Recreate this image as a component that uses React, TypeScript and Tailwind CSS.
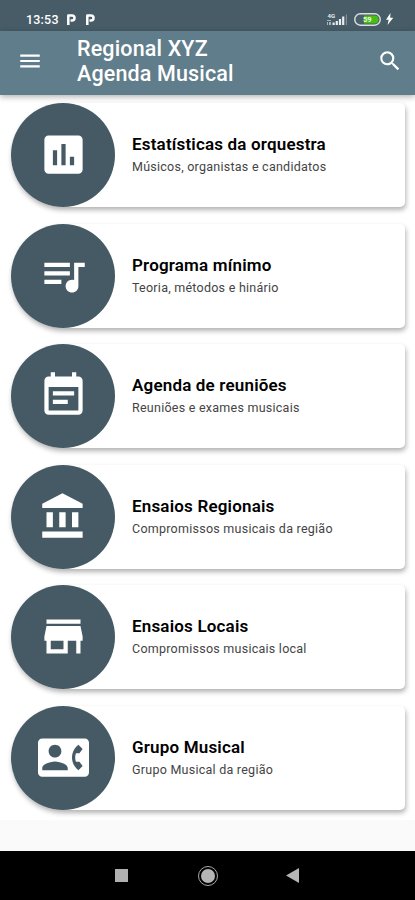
import { MdMenu, MdSearch } from "react-icons/md";

const items = [
  {
    title: "Estatísticas da orquestra",
    subtitle: "Músicos, organistas e candidatos",
    icon: "M19 3H5c-1.100 0-2 .9-2 2v14c0 1.100.9 2 2 2h14c1.100 0 2-.9 2-2V5c0-1.100-.9-2-2-2zM9 17H7v-7h2v7zm4 0h-2V7h2v10zm4 0h-2v-4h2v4z",
  },
  {
    title: "Programa mínimo",
    subtitle: "Teoria, métodos e hinário",
    icon: "M15 6H3v2h12V6zm0 4H3v2h12v-2zM3 16h8v-2H3v2zM17 6v8.180c-.31-.11-.65-.18-1-.18-1.660 0-3 1.340-3 3s1.340 3 3 3 3-1.340 3-3V8h3V6h-5z",
  },
  {
    title: "Agenda de reuniões",
    subtitle: "Reuniões e exames musicais",
    icon: "M17 10H7v2h10v-2zm2-7h-1V1h-2v2H8V1H6v2H5c-1.110 0-1.990.9-1.990 2L3 19c0 1.100.89 2 2 2h14c1.100 0 2-.9 2-2V5c0-1.100-.9-2-2-2zm0 16H5V8h14v11zm-5-5H7v2h7v-2z",
  },
  {
    title: "Ensaios Regionais",
    subtitle: "Compromissos musicais da região",
    icon: "M4 10v7h3v-7H4zm6 0v7h3v-7h-3zM2 22h19v-3H2v3zm14-12v7h3v-7h-3zm-4.500-9L2 6v2h19V6l-9.500-5z",
  },
  {
    title: "Ensaios Locais",
    subtitle: "Compromissos musicais local",
    icon: "M20 4H4v2h16V4zm1 10v-2l-1-5H4l-1 5v2h1v6h10v-6h4v6h2v-6h1zm-9 4H6v-4h6v4z",
  },
  {
    title: "Grupo Musical",
    subtitle: "Grupo Musical da região",
    icon: "M22 3H2C.9 3 0 3.900 0 5v14c0 1.100.9 2 2 2h20c1.100 0 1.990-.9 1.990-2L24 5c0-1.100-.9-2-2-2zM8 6c1.660 0 3 1.340 3 3s-1.340 3-3 3-3-1.340-3-3 1.340-3 3-3zm6 12H2v-1c0-2 4-3.100 6-3.100s6 1.100 6 3.100v1zm3.850-4h1.640L21 16l-1.990 1.990c-1.310-.98-2.280-2.380-2.730-3.990-.18-.64-.28-1.310-.28-2s.1-1.360.28-2c.45-1.620 1.420-3.010 2.730-3.990L21 8l-1.510 2h-1.640c-.22.63-.35 1.300-.35 2s.13 1.370.35 2z",
  },
];

function ParkingIcon() {
  return (
    <svg width="11" height="13" viewBox="0 0 11 13" fill="none" aria-hidden="true">
      <path d="M2.300 12V2.600H6a2.500 2.500 0 0 1 0 5H4.500" stroke="white" strokeWidth="2.500" strokeLinejoin="round" />
    </svg>
  );
}

function SignalIcon() {
  return (
    <svg width="23" height="14" viewBox="0 0 23 14" fill="#e8eef0" aria-hidden="true">
      <text x="1.500" y="5.500" fontSize="6" fontWeight="700">4G</text>
      <path d="M1 8h4v1H1zM1 10h1v3H1zM3 10h2v3H3z" opacity="0.600" />
      <path d="M6.500 10.500h2.200V13H6.500zM9.700 9h2.200v4H9.700zM12.900 7h2.200v6h-2.200zM16.100 4.500h2.200V13h-2.200z" />
      <path d="M19.800 2.500H21V13h-1.200z" opacity="0.350" />
    </svg>
  );
}

function BatteryIcon() {
  return (
    <svg width="27" height="13" viewBox="0 0 27 13" aria-hidden="true">
      <rect x="0.800" y="0.800" width="25.400" height="11.400" rx="5.500" fill="#4b5f66" stroke="#d9e0e3" strokeWidth="1.400" />
      <path d="M10 2.500h10.500a4 4 0 0 1 0 8H10z" fill="#47bd16" />
      <text x="9" y="9.300" fontSize="7.500" fontWeight="700" fill="#e9fbe2">59</text>
    </svg>
  );
}

function StatusBar() {
  return (
    <div className="flex h-[31px] items-end justify-between bg-[#475c67] pb-[5px] pl-[26px] pr-[21px] text-white">
      <div className="flex items-center">
        <span className="w-[35px] text-[12.500px] font-medium leading-[13px] tracking-[0.200px]">13:53</span>
        <div className="ml-[5px] flex gap-2">
          <ParkingIcon />
          <ParkingIcon />
        </div>
      </div>
      <div className="flex items-center">
        <SignalIcon />
        <div className="ml-[5px] mr-1">
          <BatteryIcon />
        </div>
        <svg width="9" height="12" viewBox="0 0 9 12" fill="white" aria-hidden="true">
          <path d="M5.500 0 1 6.800h2.700L2.500 12 8.300 4.800H5.200z" />
        </svg>
      </div>
    </div>
  );
}

function AppBar() {
  return (
    <header className="relative z-10 flex h-16 items-center bg-[#607d8b] text-white shadow-[0_2px_6px_rgba(0,0,0,0.3)]">
      <button className="ml-[17px] mt-[-4px]" aria-label="Menu">
        <MdMenu className="size-[26px]" />
      </button>
      <h1 className="ml-[34px] mt-[-4px] text-[21.500px] font-medium leading-[25.500px] tracking-[0.150px]">
        Regional XYZ
        <br />
        Agenda Musical
      </h1>
      <button className="ml-auto mr-3 mt-[-4px]" aria-label="Buscar">
        <MdSearch className="size-[26px]" />
      </button>
    </header>
  );
}

export default function App() {
  return (
    <div className="flex h-[900px] w-full flex-col overflow-hidden bg-[#fafafa] font-['Roboto',sans-serif]">
      <StatusBar />
      <AppBar />

      <main className="flex h-[725px] flex-col gap-[16.600px] bg-white pl-[11px] pr-[10px] pt-2">
        {items.map(({ title, subtitle, icon }) => (
          <div
            key={title}
            className="flex h-[104px] shrink-0 items-center rounded-l-[52px] rounded-r-[5px] bg-white shadow-[1px_3px_5px_rgba(0,0,0,0.300)]"
          >
            <div className="flex size-[104px] shrink-0 items-center justify-center rounded-full bg-[#455a64] text-white">
              <svg className="mt-[-1px] size-[51px]" viewBox="0 0 24 24" fill="currentColor" aria-hidden="true">
                <path d={icon} />
              </svg>
            </div>
            <div className="ml-[17px] mt-[-1px]">
              <h2 className="text-[17px] font-semibold leading-6 tracking-[0.180px] text-black">{title}</h2>
              <p className="text-[12.500px] leading-[21px] tracking-[0.250px] text-[#444]">{subtitle}</p>
            </div>
          </div>
        ))}
      </main>

      {/* System navigation */}
      <nav className="mt-auto flex h-[49px] items-center bg-black pl-[115px]">
        <div className="size-[13px] bg-[#b0b0b0]" />
        <div className="ml-[70px] flex size-5 items-center justify-center rounded-full border-[1.500px] border-[#aaa]">
          <div className="size-[14px] rounded-full bg-[#b5b5b5]" />
        </div>
        <svg className="ml-[68px]" width="13" height="15" viewBox="0 0 13 15" fill="#b5b5b5" aria-hidden="true">
          <path d="M13 0v15L0 7.500z" />
        </svg>
      </nav>
    </div>
  );
}
